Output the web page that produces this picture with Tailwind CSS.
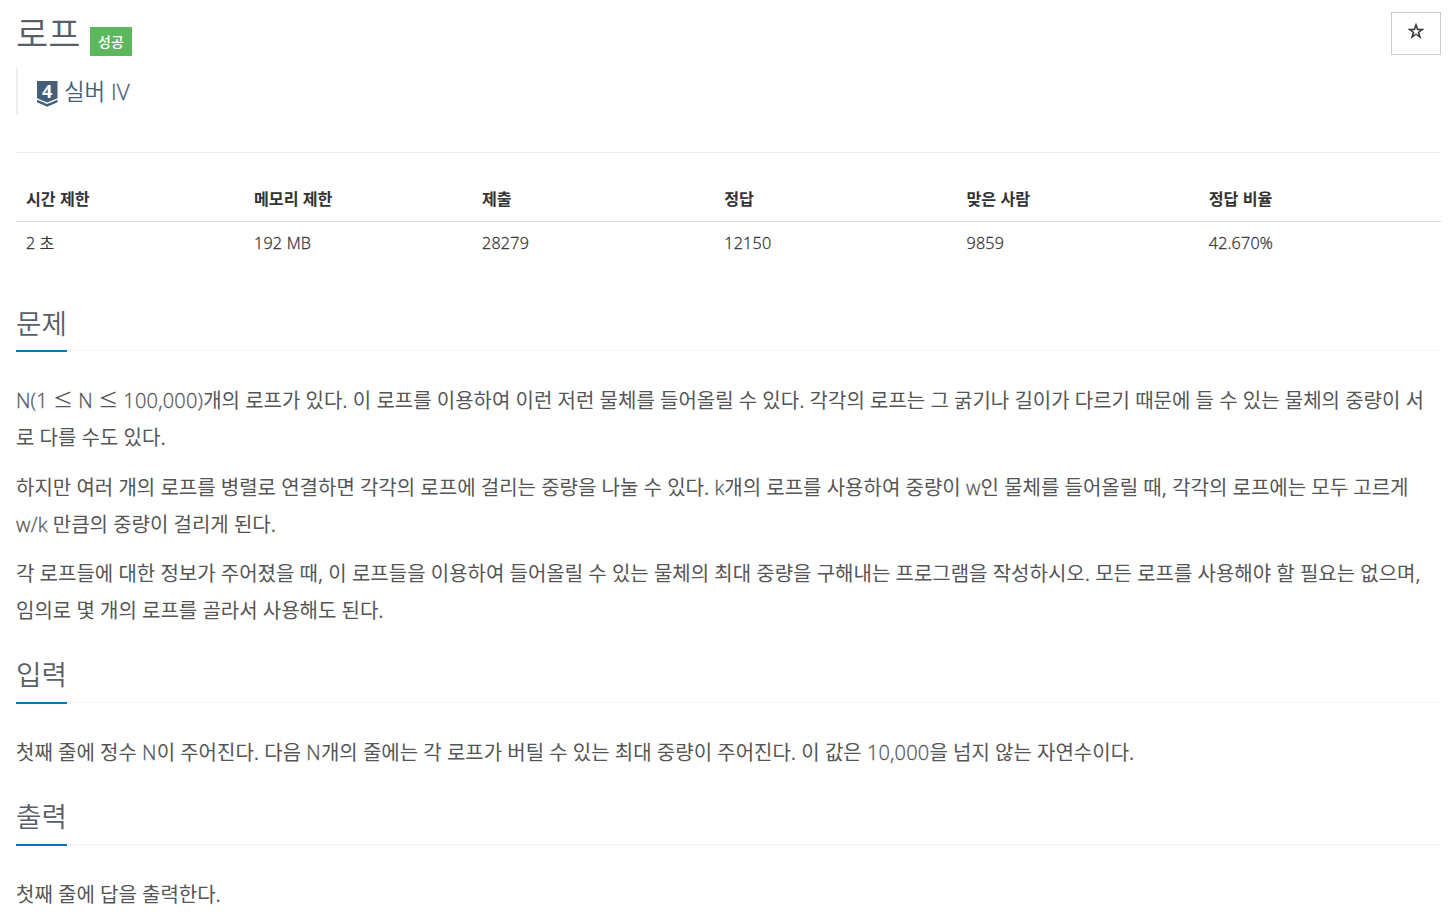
<!DOCTYPE html>
<html lang="ko">
<head>
    <meta charset="UTF-8">
    <meta name="viewport" content="width=device-width, initial-scale=1.0">
    <title>로프</title>
    <script src="https://cdn.jsdelivr.net/npm/@tailwindcss/browser@4"></script>
    <style>
        body {
            font-family: 'Open Sans', 'Noto Sans CJK KR', sans-serif;
        }
        /* Latin text is set lighter than the Korean around it */
        i {
            font-style: normal;
            font-weight: 300;
            letter-spacing: 0.2px;
            -webkit-text-stroke: 0.3px currentColor;
        }
        /* Full-width comparison signs */
        b {
            font-family: 'Noto Sans CJK KR', sans-serif;
            font-weight: 350;
        }
    </style>
</head>
<body class="bg-white text-[#333] overflow-hidden">
    <div class="pl-4 pr-[13px]">
        <!-- Title -->
        <header class="flex justify-between h-[68px]">
            <div class="flex items-start">
                <h1 class="w-[64px] whitespace-nowrap text-[35px] leading-[68px] font-[350] text-[#585f69]">로프</h1>
                <span class="mt-[27px] ml-[10px] w-[42px] h-[29px] bg-[#5cb85c] text-white text-[14px] leading-[29px] font-medium text-center">성공</span>
            </div>
            <button class="mt-3 w-[50px] h-[43px] border border-[#ccc] flex justify-center pt-[9px]">
                <svg class="w-[18px] h-[18px]" viewBox="0 0 18 18"><path fill="#333" fill-rule="evenodd" d="M9 .5l2.100 6.200h6.500l-5.200 3.900 1.900 6.300L9 13.100l-5.300 3.800 1.900-6.300L.4 6.700h6.500zM9 5.200l-1 3.100H4.900l2.500 1.900-.9 3.100L9 11.400l2.500 1.900-.9-3.100 2.500-1.900H10z"/></svg>
            </button>
        </header>

        <!-- Tier -->
        <blockquote class="h-[47px] border-l-2 border-[#eee] pl-[19px] flex items-center gap-[6px] text-[#435f7a]">
            <svg class="w-[21px] h-[26px] mt-1" viewBox="0 0 21 26"><path fill="#435f7a" d="M0 0h20.500v17.200L10.250 21.500 0 17.200z"/><path fill="#435f7a" d="M0 18.800l10.250 4.300 10.250-4.300v2.500l-10.250 4.500L0 21.300z"/><text x="10.200" y="16.500" text-anchor="middle" font-family="Open Sans" font-size="18" font-weight="700" fill="#fff">4</text></svg>
            <span class="text-[22.400px] font-[350]">실버 <i>IV</i></span>
        </blockquote>

        <hr class="mt-[37px] border-[#eee]">

        <!-- Limits and statistics -->
        <table class="mt-[22px] w-full table-fixed text-[16.150px] text-left">
            <thead>
                <tr class="h-[46px] border-b border-[#ddd]">
                    <th class="w-[16%] px-[10px] pt-[2px] font-bold">시간 제한</th>
                    <th class="w-[16%] px-[10px] pt-[2px] font-bold">메모리 제한</th>
                    <th class="w-[17%] px-[10px] pt-[2px] font-bold">제출</th>
                    <th class="w-[17%] px-[10px] pt-[2px] font-bold">정답</th>
                    <th class="w-[17%] px-[10px] pt-[2px] font-bold">맞은 사람</th>
                    <th class="w-[17%] px-[10px] pt-[2px] font-bold">정답 비율</th>
                </tr>
            </thead>
            <tbody>
                <tr class="h-[42px] font-[350]">
                    <td class="px-[10px] pt-[2px]"><i>2</i> 초</td>
                    <td class="px-[10px] pt-[2px]"><i>192 MB</i></td>
                    <td class="px-[10px] pt-[2px]"><i>28279</i></td>
                    <td class="px-[10px] pt-[2px]"><i>12150</i></td>
                    <td class="px-[10px] pt-[2px]"><i>9859</i></td>
                    <td class="px-[10px] pt-[2px]"><i>42.670%</i></td>
                </tr>
            </tbody>
        </table>

        <!-- Problem -->
        <section class="mt-[35px]">
            <div class="h-[53px] border-b border-dotted border-[#e4e9f0]">
                <h2 class="inline-block w-[51px] whitespace-nowrap h-[54px] border-b-2 border-[#0076c0] text-[27.700px] leading-[51px] font-[350] text-[#585f69]">문제</h2>
            </div>
            <div class="mt-[30px] text-[20px] leading-[37px] text-[#555] whitespace-nowrap">
                <p><i>N(1</i> <b>≤</b> <i>N</i> <b>≤</b> <i>100,000)</i>개의 로프가 있다. 이 로프를 이용하여 이런 저런 물체를 들어올릴 수 있다. 각각의 로프는 그 굵기나 길이가 다르기 때문에 들 수 있는 물체의 중량이 서<br>로 다를 수도 있다.</p>
                <p class="mt-[13px]">하지만 여러 개의 로프를 병렬로 연결하면 각각의 로프에 걸리는 중량을 나눌 수 있다. <i>k</i>개의 로프를 사용하여 중량이 <i>w</i>인 물체를 들어올릴 때, 각각의 로프에는 모두 고르게<br><i>w/k</i> 만큼의 중량이 걸리게 된다.</p>
                <p class="mt-[12px]">각 로프들에 대한 정보가 주어졌을 때, 이 로프들을 이용하여 들어올릴 수 있는 물체의 최대 중량을 구해내는 프로그램을 작성하시오. 모든 로프를 사용해야 할 필요는 없으며,<br>임의로 몇 개의 로프를 골라서 사용해도 된다.</p>
            </div>
        </section>

        <!-- Input -->
        <section class="mt-[21px]">
            <div class="h-[53px] border-b border-dotted border-[#e4e9f0]">
                <h2 class="inline-block w-[51px] whitespace-nowrap h-[54px] border-b-2 border-[#0076c0] text-[27.700px] leading-[49px] font-[350] text-[#585f69]">입력</h2>
            </div>
            <p class="mt-[31px] text-[20px] leading-[37px] text-[#555] whitespace-nowrap">첫째 줄에 정수 <i>N</i>이 주어진다. 다음 <i>N</i>개의 줄에는 각 로프가 버틸 수 있는 최대 중량이 주어진다. 이 값은 <i>10,000</i>을 넘지 않는 자연수이다.</p>
        </section>

        <!-- Output -->
        <section class="mt-[21px]">
            <div class="h-[53px] border-b border-dotted border-[#e4e9f0]">
                <h2 class="inline-block w-[51px] whitespace-nowrap h-[54px] border-b-2 border-[#0076c0] text-[27.700px] leading-[49px] font-[350] text-[#585f69]">출력</h2>
            </div>
            <p class="mt-[31px] text-[20px] leading-[37px] text-[#555] whitespace-nowrap">첫째 줄에 답을 출력한다.</p>
        </section>
    </div>
</body>
</html>
